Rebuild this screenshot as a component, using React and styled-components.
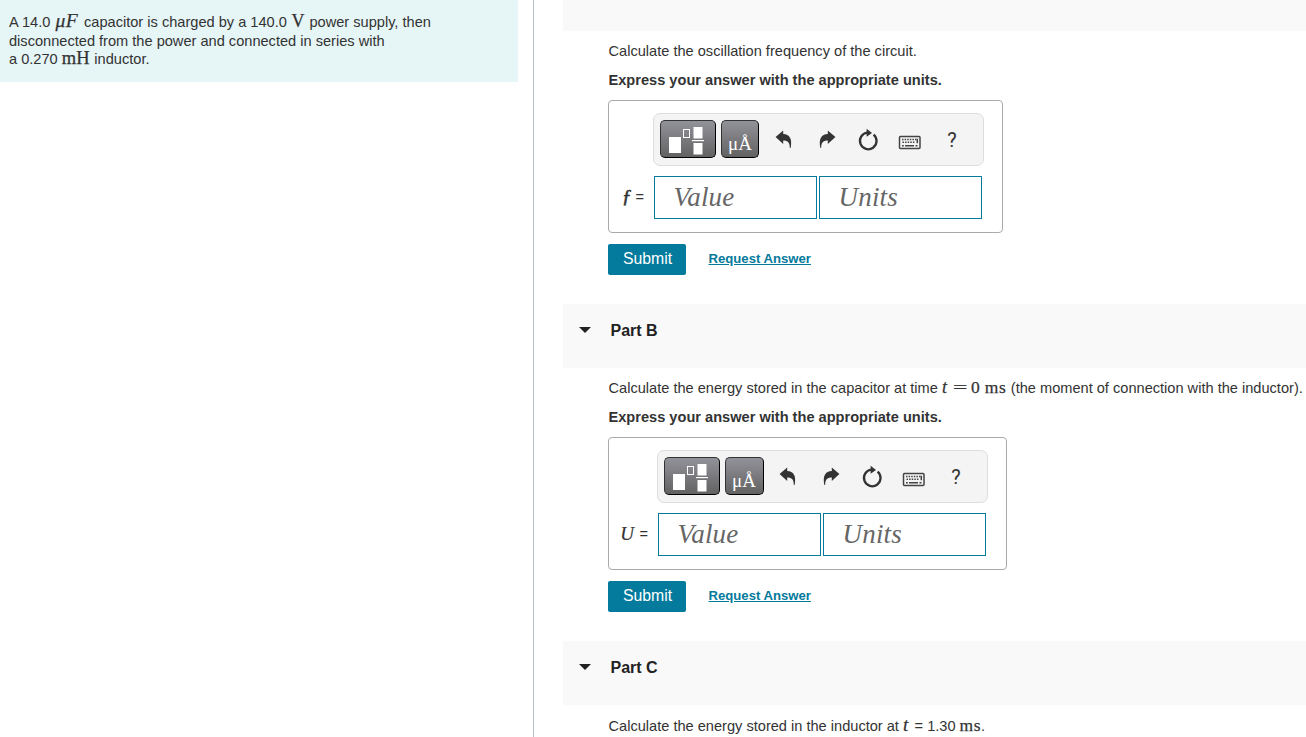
import React from "react";
import styled, { createGlobalStyle } from "styled-components";

const COLORS = {
  teal: "#047a9c",
  text: "#333333",
  panel: "#e6f5f6",
  header: "#f9f9f9",
};

function UndoIcon() {
  return (
    <svg width="42" height="38" viewBox="0 0 42 38" fill="#333">
      <path d="M12.6 17 L20.2 10.6 V14 C26.5 14 29.6 19 27.6 28 H26.8 C26.8 22.5 25 20.6 20.2 20.6 V24 Z" />
    </svg>
  );
}

function RedoIcon() {
  return (
    <svg width="42" height="38" viewBox="0 0 42 38" fill="#333">
      <path d="M30.4 17 L22.8 10.6 V14 C16.5 14 13.4 19 15.4 28 H16.2 C16.2 22.5 18 20.6 22.8 20.6 V24 Z" />
    </svg>
  );
}

function ResetIcon() {
  return (
    <svg width="42" height="38" viewBox="0 0 42 38" fill="none">
      <path
        d="M26.6 14.6 A8.3 8.3 0 1 1 20.3 12.7"
        stroke="#333"
        strokeWidth="2.3"
      />
      <path d="M19.6 8.8 L25 12.9 L19.6 16.8 Z" fill="#333" />
    </svg>
  );
}

function KeyboardIcon() {
  return (
    <svg width="42" height="38" viewBox="0 0 42 38" fill="none">
      <rect x="10.5" y="16.5" width="20.5" height="12" rx="1" stroke="#444" strokeWidth="1.5" />
      <path d="M13 19.5 H28 M13.5 22.2 H26" stroke="#444" strokeWidth="1.5" strokeDasharray="1.5 1.1" />
      <path d="M13 25.8 H14.8 M16 25.8 H25 M26.5 25.8 H28.5 M28.3 18.8 V23.2" stroke="#444" strokeWidth="1.5" />
    </svg>
  );
}

function TemplateIcon() {
  return (
    <svg width="54" height="36" viewBox="0 0 54 36">
      <rect x="8" y="16" width="12" height="16" fill="#fff" />
      <rect x="22.5" y="8.5" width="6" height="8" fill="none" stroke="#fff" />
      <rect x="32.5" y="6" width="9" height="11.5" fill="#fff" />
      <rect x="31" y="19" width="12" height="1.2" fill="#fff" />
      <rect x="32.5" y="22" width="9" height="11.5" fill="#fff" />
    </svg>
  );
}

function AnswerBox({ children, shift = 0, unitWidth = 38 }) {
  return (
    <>
      <Answer $shift={shift}>
        <Toolbar>
          <ToolButton $width={56}>
            <TemplateIcon />
          </ToolButton>
          <ToolButton $width={unitWidth}>
            <UnitText>μÅ</UnitText>
          </ToolButton>
          <Tools>
            <UndoIcon />
            <RedoIcon />
            <ResetIcon />
            <KeyboardIcon />
            <Help>?</Help>
          </Tools>
        </Toolbar>
        <Label>
          {children} <span>=</span>
        </Label>
        <Fields>
          <Field>Value</Field>
          <Field>Units</Field>
        </Fields>
      </Answer>
      <Actions>
        <Submit>Submit</Submit>
        <RequestLink href="#!">Request Answer</RequestLink>
      </Actions>
    </>
  );
}

function App() {
  return (
    <Page>
      <GlobalStyle />
      <Problem>
        <p>
          A 14.0{" "}
          <MathText $width={25.5} $size={19.5} $indent={1} $spacing={0.6}>
            <i>μF</i>
          </MathText>{" "}
          capacitor is charged by a 140.0{" "}
          <MathText $width={14.5} $size={18} $indent={0.5}>
            V
          </MathText>{" "}
          power supply, then
        </p>
        <p>disconnected from the power and connected in series with</p>
        <p>
          a 0.270{" "}
          <MathText $width={28.5} $size={18.5}>
            mH
          </MathText>{" "}
          inductor.
        </p>
      </Problem>
      <Parts>
        <PartHeader $height={31} />
        <PartBody>
          <Question>Calculate the oscillation frequency of the circuit.</Question>
          <Instruction>
            Express your answer with the appropriate units.
          </Instruction>
          <AnswerBox>
            <Symbol $heavy>ƒ</Symbol>
          </AnswerBox>
        </PartBody>
        <PartHeader $height={64}>
          <Caret />
          <h2>Part B</h2>
        </PartHeader>
        <PartBody>
          <Question>
            Calculate the energy stored in the capacitor at time{" "}
            <MathText $width={11} $size={18}>
              <i>t</i>
            </MathText>
            <MathText $width={18} $size={17}>
              <Equals>=</Equals>
            </MathText>
            <MathText $width={13.8} $size={17.5}>
              0
            </MathText>
            <MathText $width={22} $size={17.5} $spacing={0.7}>
              ms
            </MathText>{" "}
            (the moment of connection with the inductor).
          </Question>
          <Instruction>
            Express your answer with the appropriate units.
          </Instruction>
          <AnswerBox shift={4} unitWidth={39}>
            <Symbol>U</Symbol>
          </AnswerBox>
        </PartBody>
        <PartHeader $height={64}>
          <Caret />
          <h2>Part C</h2>
        </PartHeader>
        <PartBody $top={11}>
          <Question>
            Calculate the energy stored in the inductor at{" "}
            <MathText $width={7.5} $size={19}>
              <i>t</i>
            </MathText>{" "}
            = 1.30{" "}
            <MathText $width={21.5} $size={17.5} $spacing={0.5}>
              ms
            </MathText>
            .
          </Question>
        </PartBody>
      </Parts>
    </Page>
  );
}

const GlobalStyle = createGlobalStyle`
  * {
    box-sizing: border-box;
  }
  body {
    margin: 0;
    background: #fff;
    color: ${COLORS.text};
    font-family: "Liberation Sans", Arial, sans-serif;
    font-size: 14.6px;
    overflow: hidden;
  }
  p, h2 {
    margin: 0;
  }
`;

const Page = styled.div`
  display: flex;
  width: 1306px;
  height: 737px;
  overflow: hidden;
`;

const Problem = styled.section`
  flex: none;
  width: 518px;
  height: 82px;
  padding: 13px 9px;
  background: ${COLORS.panel};

  & p {
    height: 19px;
    line-height: 19px;
    white-space: nowrap;
  }
  & p:last-child {
    margin-top: -1px;
  }
`;

const Parts = styled.main`
  flex: none;
  width: 773px;
  margin-left: 15px;
  padding-left: 29px;
  border-left: 1px solid #b8c2cb;
`;

const PartHeader = styled.header`
  display: flex;
  align-items: center;
  height: ${({ $height }) => $height}px;
  padding: 0 0 12px 15.5px;
  background: ${COLORS.header};

  & h2 {
    margin: 2px 0 0 20px;
    font-size: 16px;
    line-height: 20px;
    color: #222;
  }
`;

const Caret = styled.span`
  border: 6px solid transparent;
  border-top-color: #222;
  border-bottom: 0;
`;

const PartBody = styled.div`
  padding: ${({ $top = 10 }) => $top}px 0 29px 45px;
`;

const Question = styled.p`
  height: 20px;
  padding-left: 0.5px;
  line-height: 20px;
  white-space: nowrap;
`;

const Instruction = styled(Question)`
  margin: 9px 0 10px;
  font-weight: bold;
`;

const MathText = styled.span`
  display: inline-block;
  width: ${({ $width }) => $width}px;
  padding-left: ${({ $indent = 0 }) => $indent}px;
  font-family: "Liberation Serif", "Times New Roman", serif;
  font-size: ${({ $size }) => $size}px;
  letter-spacing: ${({ $spacing = 0 }) => $spacing}px;
  line-height: 10px;
  -webkit-text-stroke: 0.25px currentColor;
`;

const Equals = styled.span`
  display: inline-block;
  transform: scaleX(1.5);
  transform-origin: left;
`;

const Answer = styled.div`
  display: grid;
  grid-template-columns: ${({ $shift }) => 44 + $shift}px 331px;
  grid-template-rows: 53px 43px;
  row-gap: 10px;
  width: ${({ $shift }) => 395 + $shift}px;
  height: 133px;
  padding-top: 12px;
  border: 1px solid #aaa;
  border-radius: 4px;
`;

const Toolbar = styled.div`
  grid-column: 2;
  display: flex;
  align-items: center;
  justify-content: space-between;
  padding: 0 10px 1px 6px;
  background: #f4f4f4;
  border: 1px solid #ddd;
  border-radius: 7px;
`;

const ToolButton = styled.div`
  flex: none;
  display: flex;
  justify-content: center;
  width: ${({ $width }) => $width}px;
  height: 38px;
  border: 1px solid #333;
  border-right-color: #000;
  border-bottom-color: #000;
  border-radius: 5px;
  background: linear-gradient(#92929a, #626262);
`;

const UnitText = styled.span`
  color: #fff;
  font-family: "Liberation Serif", serif;
  font-size: 19px;
  line-height: 46px;
`;

const Tools = styled.div`
  display: flex;
  align-items: center;
  margin-left: -1px;
`;

const Help = styled.span`
  width: 42px;
  text-align: center;
  font-family: Roboto, sans-serif;
  font-size: 20px;
  line-height: 38px;
  padding-top: 2px;
`;

const Label = styled.div`
  padding-right: 9px;
  text-align: right;
  line-height: 41px;

  & span {
    vertical-align: 1px;
  }
`;

const Symbol = styled.i`
  font-family: "Liberation Serif", serif;
  font-size: 19px;
  margin-right: ${({ $heavy }) => ($heavy ? 0 : 1.5)}px;
  -webkit-text-stroke: ${({ $heavy }) => ($heavy ? 0.6 : 0.2)}px currentColor;
`;

const Fields = styled.div`
  display: flex;
  gap: 2px;
  padding-left: 1px;
`;

const Field = styled.div`
  width: 163px;
  padding-left: 18.5px;
  border: 1px solid ${COLORS.teal};
  color: #666;
  font-family: "Liberation Serif", serif;
  font-size: 27px;
  font-style: italic;
  letter-spacing: 0.2px;
  line-height: 40px;
`;

const Actions = styled.div`
  display: flex;
  align-items: center;
  margin-top: 11px;
`;

const Submit = styled.button`
  width: 78px;
  height: 31px;
  padding: 0 0 2px 1px;
  border: 0;
  border-radius: 2px;
  background: ${COLORS.teal};
  color: #fff;
  font-family: inherit;
  font-size: 15.8px;
`;

const RequestLink = styled.a`
  margin: 0 0 2px 22.5px;
  color: ${COLORS.teal};
  font-size: 13.15px;
  font-weight: bold;
  line-height: 20px;
`;

export default App;
